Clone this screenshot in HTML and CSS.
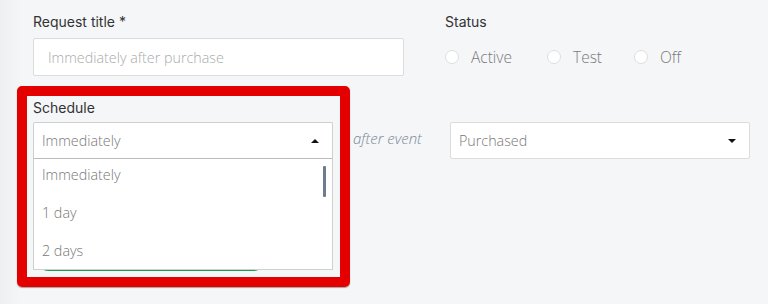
FILE: index.html
```html
<!DOCTYPE html>
<html lang="en">
<head>
    <meta charset="UTF-8">
    <meta name="viewport" content="width=device-width, initial-scale=1.0">
    <title>Request settings</title>
    <link rel="stylesheet" href="styles.css">
</head>
<body>
    <main class="form">
        <div class="row">
            <div class="field field-title">
                <label class="label" for="title">Request title *</label>
                <input class="input" type="text" id="title" placeholder="Immediately after purchase">
            </div>
            <div class="field">
                <span class="label">Status</span>
                <div class="radios">
                    <label class="radio"><span class="dot"></span>Active</label>
                    <label class="radio"><span class="dot"></span>Test</label>
                    <label class="radio"><span class="dot"></span>Off</label>
                </div>
            </div>
        </div>

        <div class="row row-schedule">
            <div class="field field-schedule">
                <span class="label">Schedule</span>
                <div class="select-wrap">
                    <div class="select open">
                        <span>Immediately</span>
                        <span class="caret up"></span>
                    </div>
                    <ul class="options">
                        <li>Immediately</li>
                        <li>1 day</li>
                        <li>2 days</li>
                        <span class="thumb"></span>
                    </ul>
                </div>
                <button class="btn-save">Save</button>
            </div>
            <span class="after">after event</span>
            <div class="select select-event">
                <span>Purchased</span>
                <span class="caret"></span>
            </div>
        </div>

        <div class="highlight"></div>
    </main>
</body>
</html>
```

FILE: styles.css
```css
body {
    margin: 0;
    padding: 0;
    font-family: "Open Sans", "Lato", sans-serif;
    background: linear-gradient(to right, #eeeff1 0, #f5f6f8 22px) #f5f6f8;
    height: 304px;
    overflow: hidden;
}

.form {
    position: relative;
    padding: 13px 0 0 33px;
}

.row {
    display: flex;
}

.field {
    display: flex;
    flex-direction: column;
}

.field-title {
    width: 371px;
    margin-right: 41px;
}

.label {
    font-family: "Inter", "Noto Sans", sans-serif;
    font-size: 14px;
    line-height: 17px;
    color: #333;
    margin-bottom: 8px;
}

.input {
    box-sizing: border-box;
    height: 38px;
    border: 1px solid #dcdcdc;
    border-radius: 2px;
    padding: 0 14px;
    font-family: "Open Sans", sans-serif;
    font-weight: 300;
    font-size: 14.3px;
    background: #fff;
}

.input::placeholder {
    color: #aaa;
}

.radios {
    display: flex;
    align-items: center;
    height: 38px;
}

.radio {
    display: flex;
    align-items: center;
    font-size: 15.5px;
    font-weight: 300;
    color: #7a7a7a;
}

.radio:nth-child(1) {
    width: 102px;
}

.radio:nth-child(2) {
    width: 87px;
}

.dot {
    box-sizing: border-box;
    width: 14px;
    height: 14px;
    border: 1px solid #dedede;
    border-radius: 50%;
    background: #fff;
    margin-right: 12px;
}

.row-schedule {
    margin-top: 23px;
    align-items: flex-start;
}

.field-schedule {
    width: 300px;
}

.field-schedule .label {
    margin-bottom: 6px;
}

.select-wrap {
    position: relative;
    z-index: 2;
}

.select {
    box-sizing: border-box;
    display: flex;
    align-items: center;
    justify-content: space-between;
    height: 37px;
    border: 1px solid #dcdcdc;
    border-radius: 2px;
    background: #fff;
    padding: 0 13px 0 8px;
    font-size: 14.3px;
    font-weight: 300;
    color: #777;
}

.select.open {
    border-color: #cfcfcf;
    border-bottom-color: #bbb;
    border-radius: 2px 2px 0 0;
}

.caret {
    width: 0;
    height: 0;
    border-left: 4px solid transparent;
    border-right: 4px solid transparent;
    border-top: 4px solid #111;
}

.caret.up {
    border-top: 0;
    border-bottom: 4px solid #111;
}

.options {
    position: absolute;
    left: 0;
    right: 0;
    top: 100%;
    margin: 0;
    padding: 0;
    list-style: none;
    box-sizing: border-box;
    height: 111px;
    background: #fff;
    border: 1px solid #cfcfcf;
    border-top: 0;
    overflow: hidden;
}

.options li {
    height: 38px;
    line-height: 20px;
    padding: 6px 8px 12px;
    box-sizing: border-box;
    font-size: 14.3px;
    font-weight: 300;
    color: #777;
}

.thumb {
    position: absolute;
    right: 6px;
    top: 7px;
    width: 3px;
    height: 31px;
    border-radius: 1px;
    background: #6d7d8d;
}

.btn-save {
    width: 236px;
    height: 35px;
    margin: 77px 0 0 0;
    border: 0;
    border-radius: 16px;
    background: #1f9a52;
    color: #fff;
    font-size: 14px;
}

.after {
    width: 77px;
    margin: 29px 0 0 20px;
    font-size: 15px;
    font-style: italic;
    font-weight: 300;
    color: #7a8896;
    line-height: 20px;
    white-space: nowrap;
}

.select-event {
    width: 300px;
    margin: 23px 0 0 20px;
}

.highlight {
    position: absolute;
    left: 17px;
    top: 86px;
    width: 333px;
    height: 201px;
    box-sizing: border-box;
    border: 10px solid #e40000;
    border-radius: 5px;
    box-shadow: 0 1px 1px rgba(0, 0, 0, 0.35);
    pointer-events: none;
    z-index: 3;
}
```
